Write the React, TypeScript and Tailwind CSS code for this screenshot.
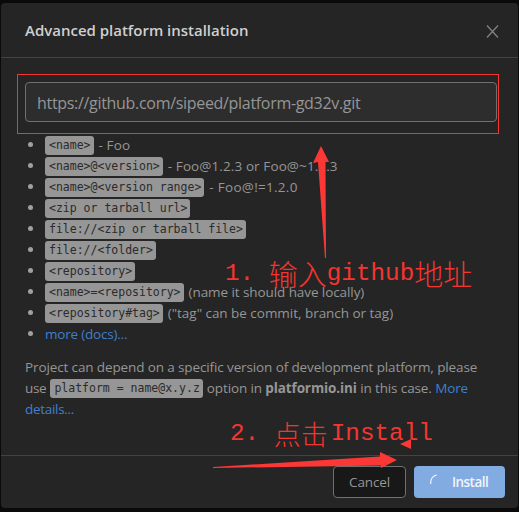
import type { ReactNode } from "react";

function Code({ children }: { children: ReactNode }) {
  return (
    <code className="inline-block h-[19px] shrink-0 whitespace-pre rounded-[3px] bg-[#969696] pl-[4px] pr-[3px] font-['DejaVu_Sans_Mono',monospace] text-[11.5px] leading-[19px] text-[#2b2b2b]">
      {children}
    </code>
  );
}

const items: { code: string; note?: string; tracking?: string }[] = [
  { code: "<name>", note: "- Foo", tracking: "tracking-[0.1px]" },
  { code: "<name>@<version>", note: "- Foo@1.2.3 or Foo@~1.2.3", tracking: "tracking-[0.1px]" },
  { code: "<name>@<version range>", note: "- Foo@!=1.2.0", tracking: "tracking-[0.28px]" },
  { code: "<zip or tarball url>" },
  { code: "file://<zip or tarball file>" },
  { code: "file://<folder>" },
  { code: "<repository>" },
  { code: "<name>=<repository>", note: "(name it should have locally)", tracking: "tracking-[-0.08px]" },
  { code: "<repository#tag>", note: '("tag" can be commit, branch or tag)', tracking: "tracking-[-0.03px]" },
];

export default function App() {
  return (
    <div className="relative h-[512px] w-[519px] overflow-hidden bg-[#0a0a0a] pl-px pt-[3px] font-['Open_Sans','Noto_Sans',sans-serif] text-[14px] text-[#969696]">
      <div className="flex h-[505px] w-[517px] flex-col rounded-[4px] bg-[#252525]">
        <header className="flex h-[55px] shrink-0 items-center justify-between border-b border-[#434343] pl-6 pr-[19px]">
          <h1 className="whitespace-nowrap text-[15px] font-semibold tracking-[-0.01px] text-[#cfcfcf]">
            Advanced platform installation
          </h1>
          <svg width="13" height="13" viewBox="0 0 13 13" fill="none" stroke="#808080" strokeWidth="1.3" className="translate-y-px">
            <path d="M1 .5 12 12.5M12 .5 1 12.5" />
          </svg>
        </header>

        <main className="flex-1 pl-4 pt-4">
          <div className="h-[60px] w-[482px] border border-[#f43530] pl-[7px] pt-[7px]">
            <div className="flex h-10 w-[472px] items-center rounded-[4px] border border-[#707070] bg-[#2d2d2d] pl-[11px] pt-[2px] text-[16px] tracking-[-0.31px]">
              https://github.com/sipeed/platform-gd32v.git
            </div>
          </div>

          <ul className="mt-px">
            {items.map((item) => (
              <li key={item.code} className="flex h-[21px] items-center pl-[11px]">
                <span className="mr-[12px] size-[5px] shrink-0 -translate-y-px rounded-full bg-[#a0a0a0]" />
                <Code>{item.code}</Code>
                {item.note && <span className={`ml-[5px] whitespace-nowrap text-[13.5px] ${item.tracking}`}>{item.note}</span>}
              </li>
            ))}
            <li className="flex h-[21px] items-center pl-[11px]">
              <span className="mr-[12px] size-[5px] shrink-0 -translate-y-px rounded-full bg-[#a0a0a0]" />
              <a className="text-[13.5px] tracking-[-0.2px] text-[#3f7fce]">more (docs)...</a>
            </li>
          </ul>

          <div className="mt-[12px] pl-2 text-[13.5px] leading-[21px]">
            <div className="flex h-[21px] items-center whitespace-pre">
              <span className="tracking-[-0.12px]">Project can depend on a specific version of development platform, please</span>
            </div>
            <div className="flex h-[21px] items-center whitespace-pre">
              <span className="mr-[4px] tracking-[-0.3px]">use</span>
              <Code>platform = name@x.y.z</Code>
              <span className="ml-[4px] tracking-[-0.12px]">
                option in <b className="font-bold">platformio.ini</b> in this case. <a className="text-[#3f7fce]">More</a>
              </span>
            </div>
            <div className="flex h-[21px] items-center">
              <a className="tracking-[-0.3px] text-[#3f7fce]">details...</a>
            </div>
          </div>
        </main>

        <footer className="flex h-[53px] shrink-0 items-start justify-end gap-2 border-t border-[#434343] pr-[13px] pt-[10px] text-[13.5px]">
          <button className="h-8 w-[73px] rounded-[4px] border border-[#707070] bg-[#181818] tracking-[-0.15px]">Cancel</button>
          <button className="flex h-8 w-[91px] items-center rounded-[4px] bg-[#82abe1] pl-4 font-semibold text-[#f0f5fc]">
            <svg width="8" height="11" viewBox="0 0 8 11" fill="none" stroke="currentColor" strokeWidth="1.2" className="mr-[14px] -translate-y-[3px]">
              <path d="M.8 10C.2 5.500 2.500 1.600 6.800 1" />
            </svg>
            <span className="tracking-[-0.55px]">Install</span>
          </button>
        </footer>
      </div>

      <svg className="pointer-events-none absolute inset-0" width="519" height="512" fill="#fb3836">
        <path d="M321 146 329 162H325.500L326 258H325L318 162L313 163Z" />
        <path d="M213 467 380 456.500V452L397 460L381 468V465.500L213 468Z" />
        <path d="M400 444 411 439V449Z" />
      </svg>
      <div className="absolute left-[225px] top-[257px] flex h-[34px] items-center whitespace-pre font-['Liberation_Mono',monospace] text-[24.3px] leading-[34px] text-[#f43530]">
        <span>1. </span>
        <span className="-translate-y-px font-['Noto_Sans_CJK_SC',sans-serif] text-[29px] font-light">输入</span>
        <span>github</span>
        <span className="-translate-y-px font-['Noto_Sans_CJK_SC',sans-serif] text-[29px] font-light">地址</span>
      </div>
      <div className="absolute left-[230px] top-[417px] flex h-[34px] items-center whitespace-pre font-['Liberation_Mono',monospace] text-[24.3px] leading-[34px] text-[#f43530]">
        <span>2. </span>
        <span className="mr-[3px] font-['Noto_Sans_CJK_SC',sans-serif] text-[27px] font-light">点击</span>
        <span>Install</span>
      </div>
    </div>
  );
}
